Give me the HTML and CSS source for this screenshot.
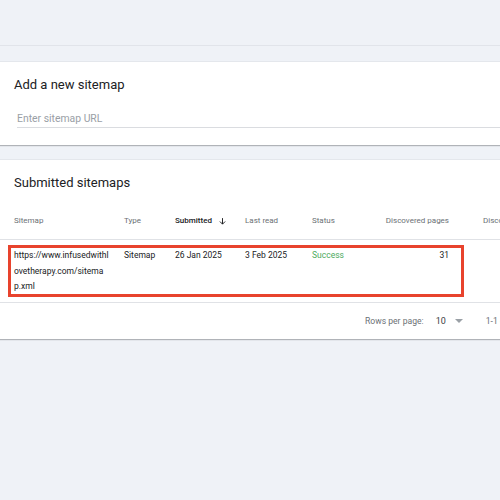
FILE: index.html
```html
<!DOCTYPE html>
<html>
<head>
<meta charset="utf-8">
<link rel="stylesheet" href="styles.css">
</head>
<body>
<div class="page">
  <div class="topbar"></div>
  <div class="card add-card">
    <h2 class="card-title">Add a new sitemap</h2>
    <div class="input-wrap">
      <input class="url-input" type="text" placeholder="Enter sitemap URL">
    </div>
  </div>
  <div class="card list-card">
    <h2 class="card-title list-title">Submitted sitemaps</h2>
    <div class="table">
      <div class="row head">
        <div class="cell">Sitemap</div>
        <div class="cell">Type</div>
        <div class="cell sorted">Submitted <svg class="arrow" viewBox="0 0 12 12" width="9" height="9"><path d="M6 1.5v8M2.5 6l3.5 3.5L9.5 6" fill="none" stroke="#202124" stroke-width="1.3"/></svg></div>
        <div class="cell">Last read</div>
        <div class="cell">Status</div>
        <div class="cell num">Discovered pages</div>
        <div class="cell extra">Discovered videos</div>
      </div>
      <div class="row data">
        <div class="cell url"><span class="ln">https://www.infusedwithl</span><span class="ln">ovetherapy.com/sitema</span><span class="ln">p.xml</span></div>
        <div class="cell">Sitemap</div>
        <div class="cell">26 Jan 2025</div>
        <div class="cell">3 Feb 2025</div>
        <div class="cell success">Success</div>
        <div class="cell num">31</div>
        <div class="cell extra"></div>
      </div>
      <div class="highlight"></div>
    </div>
    <div class="footer">
      <span class="rpp">Rows per page:</span>
      <span class="rpp-val">10</span>
      <svg class="caret" viewBox="0 0 10 5" width="8" height="4"><path d="M0 0h10L5 5z" fill="#9aa0a6"/></svg>
      <span class="range">1-1 of 1</span>
    </div>
  </div>
</div>
</body>
</html>
```
FILE: styles.css
```css
html, body {
  margin: 0;
  padding: 0;
  background: #eff2f7;
  font-family: Roboto, "Liberation Sans", Arial, sans-serif;
  overflow: hidden;
}
.page {
  width: 500px;
  height: 500px;
}
.topbar {
  height: 45px;
  border-bottom: 1px solid #e1e4ea;
  margin-bottom: 16px;
}
.card {
  background: #fff;
  box-shadow: 0 1px 1px rgba(60,64,67,0.35), 0 -1px 0 rgba(60,64,67,0.06);
}
.add-card {
  height: 83px;
  padding: 0 0 0 14px;
  box-sizing: border-box;
  overflow: hidden;
}
.card-title {
  margin: 0;
  font-weight: 400;
  font-size: 13px;
  color: #202124;
  padding-top: 14px;
  line-height: 18px;
}
.input-wrap {
  margin-top: 15px;
  margin-left: 3px;
  border-bottom: 1px solid #dadce0;
}
.url-input {
  display: block;
  border: none;
  outline: none;
  padding: 0;
  font-family: inherit;
  font-size: 10.4px;
  line-height: 16px;
  height: 18px;
  width: 100%;
  background: transparent;
}
.url-input::placeholder {
  color: #9aa0a6;
}
.list-card {
  margin-top: 15px;
  height: 179px;
  overflow: hidden;
}
.list-title {
  padding-left: 14px;
  padding-top: 14px;
}
.table {
  position: relative;
  margin-top: 22px;
}
.row {
  display: grid;
  grid-template-columns: 110px 51px 70px 67px 50px 87px 120px;
  padding-left: 14px;
  border-bottom: 1px solid #e0e2e6;
  font-size: 8px;
}
.cell {
  white-space: nowrap;
}
.head {
  height: 25px;
  align-items: start;
  color: #6b7075;
}
.head .cell {
  line-height: 14px;
}
.sorted {
  color: #202124;
  font-weight: 500;
  display: flex;
  align-items: center;
  gap: 6px;
}
.arrow {
  display: block;
  flex-shrink: 0;
}
.num {
  text-align: right;
}
.extra {
  padding-left: 34px;
}
.data {
  color: #202124;
  font-size: 8.5px;
  line-height: 15.5px;
  padding-top: 8px;
  padding-bottom: 7px;
}
.ln {
  display: block;
}
.success {
  color: #4caa5e;
}
.highlight {
  position: absolute;
  left: 8px;
  top: 31px;
  width: 450px;
  height: 46px;
  border: 3px solid #e8432d;
}
.footer {
  display: flex;
  align-items: center;
  height: 36px;
  padding-left: 365px;
  font-size: 8.6px;
  color: #6b7075;
  white-space: nowrap;
}
.footer > * {
  flex-shrink: 0;
}
.rpp-val {
  margin-left: 12px;
  color: #3c4043;
  font-size: 9px;
}
.caret {
  display: block;
  margin-left: 9px;
}
.range {
  margin-left: 23px;
}
```
